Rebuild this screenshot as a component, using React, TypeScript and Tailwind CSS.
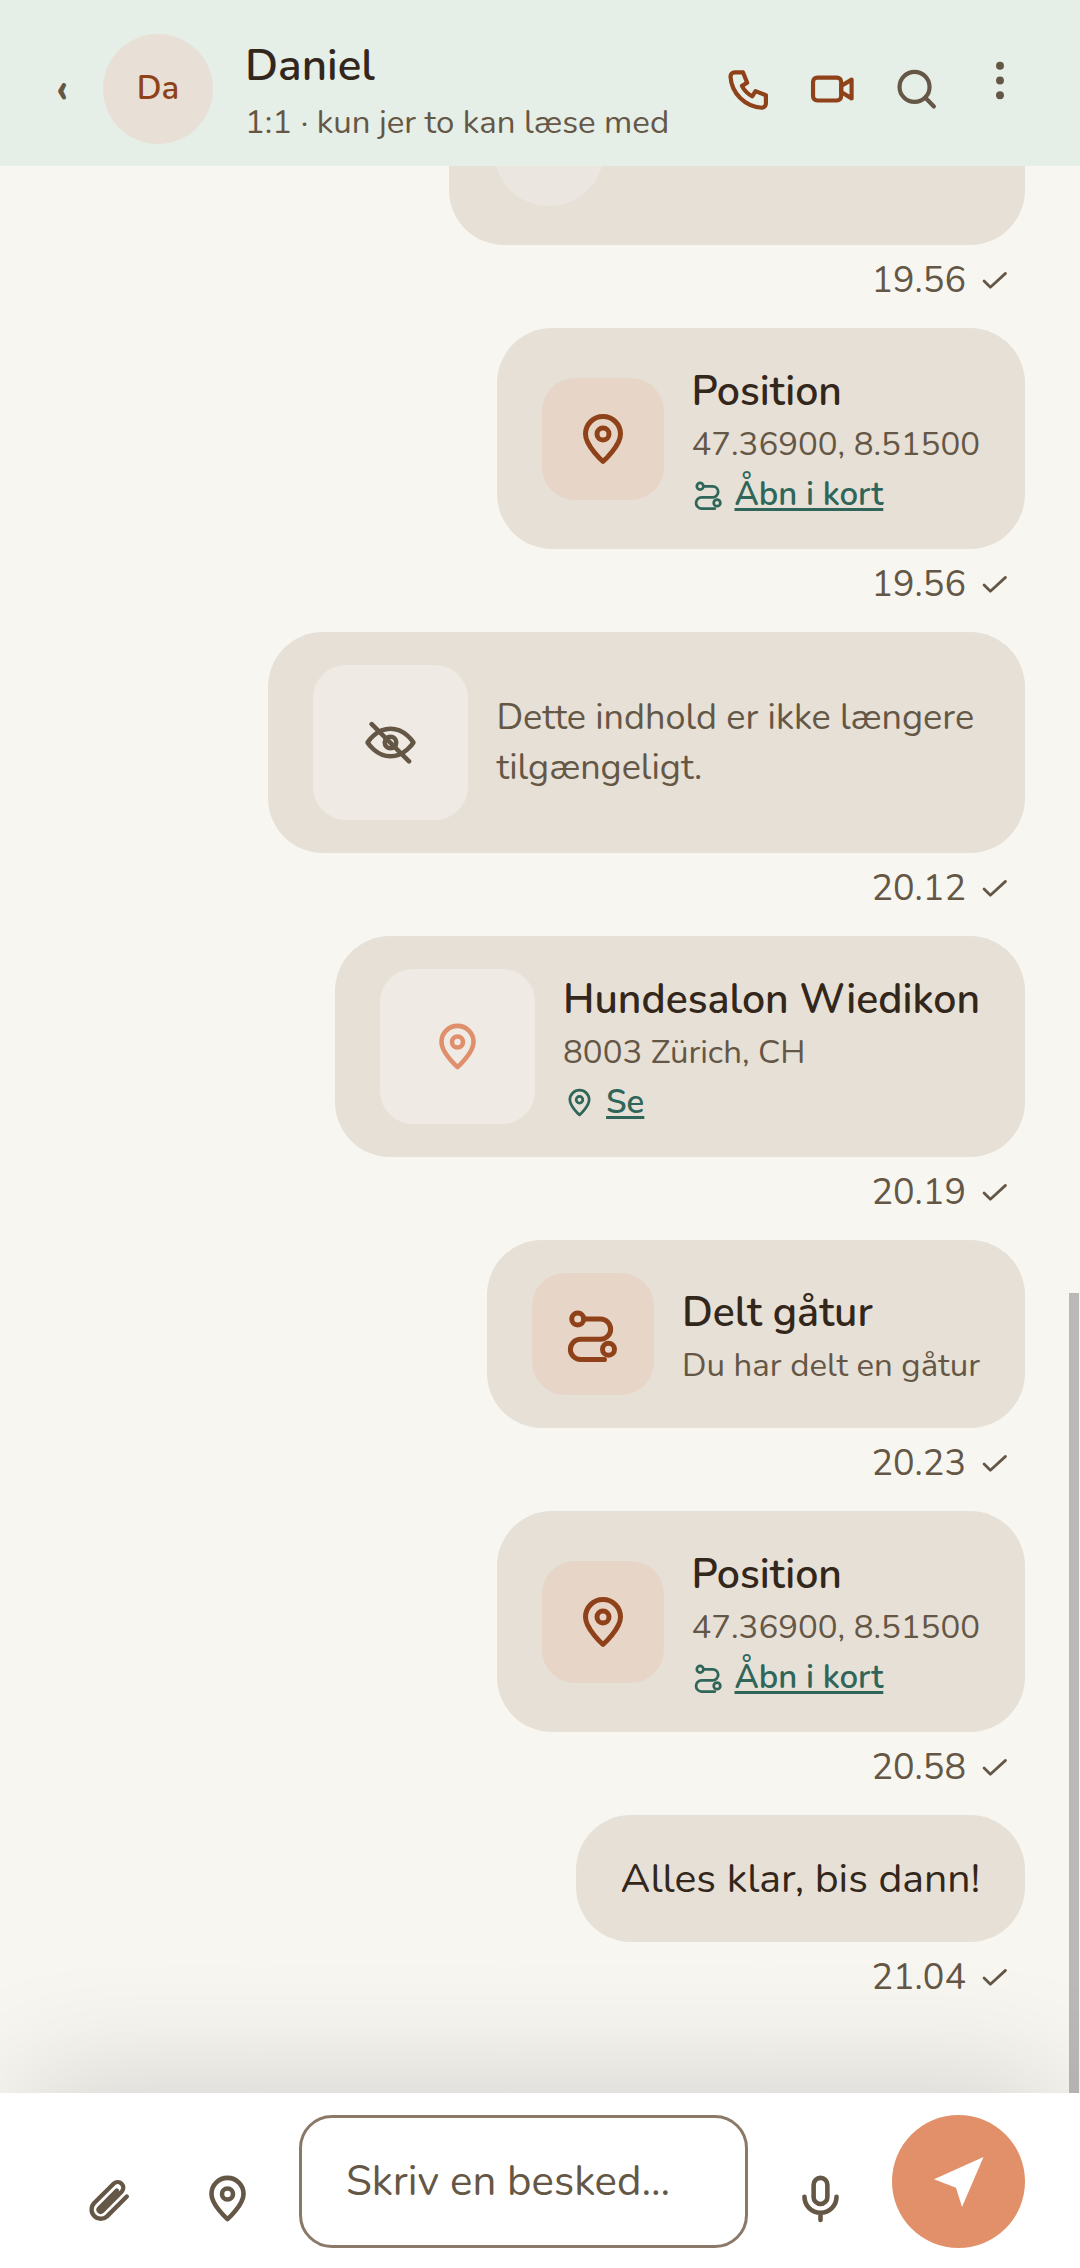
import React from 'react'

type IconProps = { className?: string }

interface Message {
  id: number
  kind: 'contact' | 'position' | 'unavailable' | 'place' | 'walk' | 'text'
  time: string
  title?: string
  detail?: string
  link?: string
}

const messages: Message[] = [
  { id: 1, kind: 'contact', time: '19.56' },
  { id: 2, kind: 'position', time: '19.56', title: 'Position', detail: '47.36900, 8.51500', link: 'Åbn i kort' },
  { id: 3, kind: 'unavailable', time: '20.12', detail: 'Dette indhold er ikke længere tilgængeligt.' },
  { id: 4, kind: 'place', time: '20.19', title: 'Hundesalon Wiedikon', detail: '8003 Zürich, CH', link: 'Se' },
  { id: 5, kind: 'walk', time: '20.23', title: 'Delt gåtur', detail: 'Du har delt en gåtur' },
  { id: 6, kind: 'position', time: '20.58', title: 'Position', detail: '47.36900, 8.51500', link: 'Åbn i kort' },
  { id: 7, kind: 'text', time: '21.04', detail: 'Alles klar, bis dann!' },
]

const Icon: React.FC<IconProps & { children: React.ReactNode }> = ({ className, children }) => (
  <svg
    viewBox="0 0 24 24"
    fill="none"
    stroke="currentColor"
    strokeWidth="2"
    strokeLinecap="round"
    strokeLinejoin="round"
    aria-hidden="true"
    className={className}
  >
    {children}
  </svg>
)

const PinIcon = ({ className }: IconProps) => (
  <Icon className={className}>
    <path d="M12 21s7-6.2 7-11a7 7 0 1 0-14 0c0 4.8 7 11 7 11z" />
    <circle cx="12" cy="10" r="2.4" />
  </Icon>
)

const RouteIcon = ({ className }: IconProps) => (
  <Icon className={className}>
    <circle cx="5.9" cy="6" r="2.4" />
    <circle cx="18.2" cy="18.1" r="2.4" />
    <path d="M8.3 6H15a4.05 4.05 0 0 1 0 8.1H7a4.05 4.05 0 0 0 0 8.1h9.6" />
  </Icon>
)

const EyeOffIcon = ({ className }: IconProps) => (
  <Icon className={className}>
    <path d="M2 12s3.6-6 10-6 10 6 10 6-3.6 6-10 6-10-6-10-6z" />
    <circle cx="12" cy="12" r="2.5" />
    <path d="M3.8 4l16.3 16.2" />
  </Icon>
)

const PhoneIcon = ({ className }: IconProps) => (
  <Icon className={className}>
    <path d="M5.6 4h4l2 5-2.5 1.5a11 11 0 0 0 5 5l1.5-2.5 5 2v4a2 2 0 0 1-2 2A16 16 0 0 1 3.6 6a2 2 0 0 1 2-2z" />
  </Icon>
)

const VideoIcon = ({ className }: IconProps) => (
  <Icon className={className}>
    <rect x="2.9" y="6.5" width="13.5" height="11" rx="2" />
    <path d="M16.4 10.6l5-3.1v9l-5-3.1z" />
  </Icon>
)

const SearchIcon = ({ className }: IconProps) => (
  <Icon className={className}>
    <circle cx="11.3" cy="11" r="7.2" />
    <path d="M16.5 16.2l4.1 4.2" />
  </Icon>
)

const MoreIcon = ({ className }: IconProps) => (
  <svg viewBox="0 0 24 24" fill="currentColor" aria-hidden="true" className={className}>
    <circle cx="12" cy="0.8" r="1.9" />
    <circle cx="12" cy="7.9" r="1.9" />
    <circle cx="12" cy="15" r="1.9" />
  </svg>
)

const CheckIcon = ({ className }: IconProps) => (
  <Icon className={className}>
    <path d="M4.4 11.6L9 16.2 20 6.1" />
  </Icon>
)

const ClipIcon = ({ className }: IconProps) => (
  <svg
    viewBox="0 0 165 165"
    fill="none"
    stroke="currentColor"
    strokeWidth="13"
    strokeLinecap="round"
    aria-hidden="true"
    className={className}
  >
    <path d="M134.5 76.5L75 136A27.6 27.6 0 0 1 36 97L95.5 37.5A17 17 0 0 1 119.5 61.5L60 121A6.4 6.4 0 0 1 51 112L104.5 58.5" />
  </svg>
)

const MicIcon = ({ className }: IconProps) => (
  <Icon className={className}>
    <rect x="9" y="3" width="6" height="11.4" rx="3" />
    <path d="M5 11.2a7 7 0 0 0 14 0M12 18.2v3.2" />
  </Icon>
)

const SendIcon = ({ className }: IconProps) => (
  <svg viewBox="0 0 50 50" fill="currentColor" aria-hidden="true" className={className}>
    <path d="M49.5 0L0 22.3l22 8.4L28 50z" />
  </svg>
)

const Details: React.FC<{ message: Message }> = ({ message }) => {
  const LinkIcon = message.kind === 'place' ? PinIcon : RouteIcon
  return (
    <div>
      <h2 className="text-[41px] leading-[62px] font-semibold text-[#33271b]">{message.title}</h2>
      <p className="text-[33px] leading-[43px]">{message.detail}</p>
      {message.link && (
        <div className="mt-[7px] flex items-center gap-2.5 text-[33px] leading-[43px] font-semibold text-[#2f6659]">
          <LinkIcon className="size-[33px]" />
          <a href="#kort" className="underline decoration-3 underline-offset-3">
            {message.link}
          </a>
        </div>
      )}
    </div>
  )
}

const BubbleContent: React.FC<{ message: Message }> = ({ message }) => {
  switch (message.kind) {
    case 'contact':
      return (
        <div className="flex h-[122px] w-[486px] items-center">
          <div className="size-[110px] rounded-full bg-[#ebe6e0]" />
        </div>
      )
    case 'unavailable':
      return (
        <>
          <div className="flex size-[155px] shrink-0 items-center justify-center rounded-[33px] bg-[#efeae4]">
            <EyeOffIcon className="size-[55px]" />
          </div>
          <p className="text-[36px] leading-[50px]">{message.detail}</p>
        </>
      )
    case 'place':
      return (
        <>
          <div className="flex size-[155px] shrink-0 items-center justify-center rounded-[33px] bg-[#efeae4] text-[#df8f6b]">
            <PinIcon className="size-[55px]" />
          </div>
          <Details message={message} />
        </>
      )
    case 'text':
      return <p className="text-[41px] leading-[61px] text-[#33271b]">{message.detail}</p>
    default:
      return (
        <>
          <div className="flex size-[122px] shrink-0 items-center justify-center rounded-[33px] bg-[#e7d6c7] text-[#8f421a]">
            {message.kind === 'walk' ? (
              <RouteIcon className="size-[60px]" />
            ) : (
              <PinIcon className="size-[60px]" />
            )}
          </div>
          <Details message={message} />
        </>
      )
  }
}

const headerActions = [
  { label: 'Ring op', icon: PhoneIcon, className: 'text-[#8f421a]' },
  { label: 'Videoopkald', icon: VideoIcon, className: 'text-[#8f421a]' },
  { label: 'Søg', icon: SearchIcon, className: 'text-[#655746]' },
  { label: 'Mere', icon: MoreIcon, className: 'text-[#655746]' },
]

export default function App() {
  return (
    <div className="flex h-screen flex-col bg-[#f7f6f1] font-['Nunito','Open_Sans',sans-serif] text-[#655746]">
      <header className="flex items-center bg-[#e5eee7] pt-[29px] pr-[38px] pb-[17px] pl-[33px]">
        <button type="button" aria-label="Tilbage" className="mr-3 w-[58px] text-[44px] leading-none font-bold">
          ‹
        </button>
        <div className="flex size-[110px] shrink-0 items-center justify-center rounded-full bg-[#e8e0d6] text-[33px] font-semibold text-[#8f421a]">
          Da
        </div>
        <div className="ml-8 min-w-0 flex-1 pt-1.5">
          <h1 className="text-[44px] leading-[62px] font-semibold text-[#33271b]">Daniel</h1>
          <p className="text-[33px] leading-[52px]">1:1 · kun jer to kan læse med</p>
        </div>
        {headerActions.map(({ label, icon: ActionIcon, className }) => (
          <button key={label} type="button" aria-label={label} className={`flex w-[84px] justify-center ${className}`}>
            <ActionIcon className="size-[50px] overflow-visible" />
          </button>
        ))}
      </header>

      <main className="relative flex min-h-0 flex-1 flex-col justify-end overflow-hidden px-[55px] pb-[68px]">
        {messages.map((message) => (
          <article key={message.id} className="mb-[22px] flex flex-col items-end">
            <div className="flex max-w-[78%] items-center gap-7 rounded-[55px] bg-[#e7e0d6] px-[45px] py-[33px]">
              <BubbleContent message={message} />
            </div>
            <div className="mt-[11px] flex items-center gap-3 pr-3.5 text-[36px] leading-[50px]">
              <time>{message.time}</time>
              <CheckIcon className="size-[33px]" />
            </div>
          </article>
        ))}
        <div className="absolute right-px bottom-0 h-[41.5%] w-2.5 bg-[#bab9b7]" />
      </main>

      <form
        onSubmit={(e) => e.preventDefault()}
        className="relative flex items-end gap-[18px] bg-white pt-[22px] pr-[55px] pb-5 pl-[55px] shadow-[0_-28px_130px_-22px_rgba(0,0,0,0.16)]"
      >
        <div className="flex gap-2.5">
          <button type="button" aria-label="Vedhæft fil" className="flex h-[100px] w-[108px] items-center justify-center">
            <ClipIcon className="size-[55px]" />
          </button>
          <button type="button" aria-label="Del position" className="flex h-[100px] w-[108px] items-center justify-center">
            <PinIcon className="size-[55px]" />
          </button>
        </div>
        <input
          type="text"
          aria-label="Besked"
          placeholder="Skriv en besked..."
          className="h-[133px] min-w-0 flex-1 rounded-[33px] border-3 border-[#8b7968] bg-white px-11 text-[42px] placeholder:text-[#655746] placeholder:opacity-100"
        />
        <button type="button" aria-label="Optag lyd" className="flex h-[100px] w-[108px] items-center justify-center">
          <MicIcon className="size-[55px]" />
        </button>
        <button
          type="submit"
          aria-label="Send"
          className="flex size-[133px] items-center justify-center rounded-full bg-[#e1906a] text-white"
        >
          <SendIcon className="size-[50px]" />
        </button>
      </form>
    </div>
  )
}
